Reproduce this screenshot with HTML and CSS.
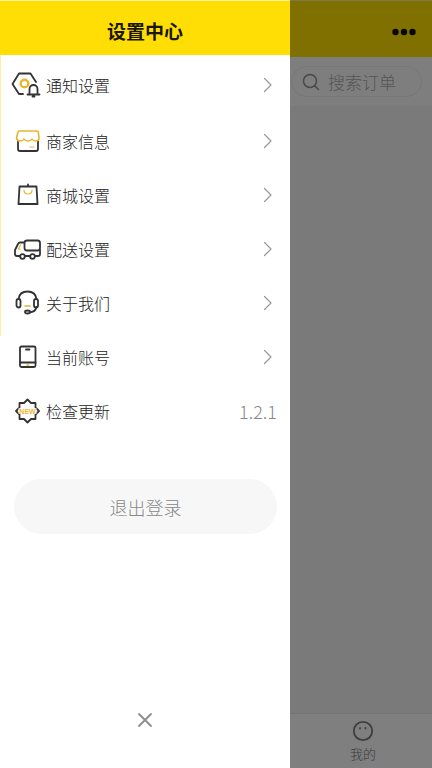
FILE: index.html
```html
<!DOCTYPE html>
<html lang="zh-CN">
<head>
<meta charset="utf-8">
<meta name="viewport" content="width=device-width, initial-scale=1">
<title>设置中心</title>
<link rel="stylesheet" href="styles.css">
</head>
<body>
<div class="app">
  <aside class="drawer">
    <header class="drawer-header"><h1>设置中心</h1></header>
    <nav class="menu">
      <a class="item" href="#notice">
        <svg class="icon" viewBox="0 0 32 32"><path class="ink" d="M12 25H8L1.500 15 8 4.500H19.500L25 13"/><circle class="gold thick" cx="13.500" cy="14.500" r="3.800"/><path class="ink" d="M18.500 25V20a4 4 0 0 1 8 0V25M16.500 25.500H28.500M21.500 27.500h2"/></svg>
        <span class="label">通知设置</span>
        <svg class="chevron" viewBox="0 0 10 16"><path d="M1.500 1.500 8 8l-6.500 6.500"/></svg>
      </a>
      <a class="item" href="#shop">
        <svg class="icon" viewBox="0 0 32 32"><path class="ink" d="M7 16v8q0 2 2 2H25q2 0 2-2V16"/><path class="gold" d="M8 6H26q1 0 1.300 1L28 13q0 3-3 3t-4-2q-1 2-4 2t-4-2q-1 2-4 2t-3.500-3L7 7q.200-1 1-1Z"/><path class="gold thin" d="M19 22h4"/></svg>
        <span class="label">商家信息</span>
        <svg class="chevron" viewBox="0 0 10 16"><path d="M1.500 1.500 8 8l-6.500 6.500"/></svg>
      </a>
      <a class="item" href="#mall">
        <svg class="icon" viewBox="0 0 32 32"><path class="ink" d="M8.500 7.500H25.500L26.500 25H7.500ZM17 7V5.500"/><path class="gold thin" d="M13 11q0 4 4 4t4-4"/></svg>
        <span class="label">商城设置</span>
        <svg class="chevron" viewBox="0 0 10 16"><path d="M1.500 1.500 8 8l-6.500 6.500"/></svg>
      </a>
      <a class="item" href="#delivery">
        <svg class="icon" viewBox="0 0 32 32"><path class="ink" d="M9 23H6q-2 0-2-2V17L7 11q.700-1.500 2-1.500h4M14 23h5M24 23h3q2 0 2-2V17"/><rect class="ink" x="13.500" y="7.500" width="15.500" height="10" rx="2.500"/><circle class="ink" cx="11.500" cy="23.500" r="2.300"/><circle class="ink" cx="21.500" cy="23.500" r="2.300"/><path class="gold thin" d="M9.500 12 7.500 16h1.500"/></svg>
        <span class="label">配送设置</span>
        <svg class="chevron" viewBox="0 0 10 16"><path d="M1.500 1.500 8 8l-6.500 6.500"/></svg>
      </a>
      <a class="item" href="#about">
        <svg class="icon" viewBox="0 0 32 32"><path class="ink" d="M7.500 12q1-7.500 9-7.500t9 7.500M25.500 20q-1 5-7 5.500"/><rect class="ink" x="5.500" y="12" width="4" height="8.500" rx="2"/><rect class="ink" x="23" y="12" width="4" height="8.500" rx="2"/><ellipse class="ink" cx="16.500" cy="25" rx="2.500" ry="1.500"/><path class="gold" d="M14 19h5"/></svg>
        <span class="label">关于我们</span>
        <svg class="chevron" viewBox="0 0 10 16"><path d="M1.500 1.500 8 8l-6.500 6.500"/></svg>
      </a>
      <a class="item" href="#account">
        <svg class="icon" viewBox="0 0 32 32"><rect class="ink" x="9" y="5.500" width="15.500" height="20.500" rx="1.500"/><path class="ink" d="M9 21.500H24.500M15 8.500h3.500"/><path class="gold" d="M16 24h1.500"/></svg>
        <span class="label">当前账号</span>
        <svg class="chevron" viewBox="0 0 10 16"><path d="M1.500 1.500 8 8l-6.500 6.500"/></svg>
      </a>
      <a class="item" href="#update">
        <svg class="icon" viewBox="0 0 32 32"><path class="ink" d="M16.500 4.500 20 8H24.500V12.500L28 16 24.500 19.500V24H20L16.500 27.500 13 24H8.500V19.500L5 16 8.500 12.500V8H13Z"/><rect class="gap" x="7.500" y="13.200" width="18" height="5.600"/><text class="new" x="16.500" y="18.500" text-anchor="middle">NEW</text></svg>
        <span class="label">检查更新</span>
        <span class="version">1.2.1</span>
      </a>
    </nav>
    <button class="logout" type="button">退出登录</button>
    <button class="close" type="button" aria-label="关闭"><svg viewBox="0 0 16 16"><path d="M2 2 14 14M14 2 2 14"/></svg></button>
  </aside>
  <main class="page">
    <header class="page-header">
      <button class="more" type="button" aria-label="更多"><svg viewBox="0 0 24 8"><circle cx="3.500" cy="4" r="3.200"/><circle cx="12" cy="4" r="3.200"/><circle cx="20.500" cy="4" r="3.200"/></svg></button>
    </header>
    <div class="search-bar">
      <label class="search">
        <svg viewBox="0 0 18 18"><circle cx="8" cy="8" r="6.500"/><path d="m13 13 3.500 3.500"/></svg>
        <input type="search" placeholder="搜索订单" aria-label="搜索订单">
      </label>
    </div>
    <section class="orders"></section>
    <footer class="tabbar">
      <a class="tab" href="#me">
        <svg viewBox="0 0 22 22"><circle cx="11" cy="11" r="9.200"/><path d="M8 8v.500M13.500 8v.500"/></svg>
        <span>我的</span>
      </a>
    </footer>
  </main>
</div>
</body>
</html>
```

FILE: styles.css
```css
* { box-sizing: border-box; }

body {
  margin: 0;
  font-family: "Noto Sans CJK SC", sans-serif;
  font-weight: 300;
  color: #222;
}

a { color: inherit; text-decoration: none; }
button { border: 0; padding: 0; background: none; font: inherit; }
svg { display: block; fill: none; stroke-linecap: round; stroke-linejoin: round; }

.app { display: grid; grid-template-columns: 290px 1fr; min-height: 100vh; }

.drawer { display: flex; flex-direction: column; background: #fff; }

.drawer-header {
  display: flex;
  align-items: center;
  justify-content: center;
  height: 55px;
  padding-top: 6px;
  border-top: 1px solid #fff29a;
  background: #ffde05;
}
.drawer-header h1 { margin: 0; font-size: 19px; line-height: 28px; font-weight: 700; color: #1a1600; }

.menu {
  background: linear-gradient(#fff0a0, #fff0a0) left top / 1px 281px no-repeat;
}
.item {
  display: flex;
  align-items: center;
  height: 54px;
  padding: 0 13px 0 11px;
}
.item:first-child { height: 59px; }
.icon { width: 32px; height: 32px; margin-right: 3px; }
.label { flex: 1; font-size: 16px; line-height: 24px; }
.chevron { width: 10px; height: 16px; margin-right: 4px; stroke: #999; stroke-width: 1.2; }
.version { font-size: 18px; line-height: 24px; color: #888; }

.ink { stroke: #333; stroke-width: 1.8; }
.gold { stroke: #e8b52e; stroke-width: 1.6; }
.thin { stroke-width: 1.2; }
.thick { stroke-width: 2.4; }
.gap { fill: #fff; }
.new { fill: #f0b62d; font: 700 7px "Liberation Sans", sans-serif; }

.logout {
  height: 55px;
  margin: 41px 13px 0 14px;
  border-radius: 28px;
  background: #f7f7f7;
  font-size: 18px;
  color: #888;
}

.close { align-self: center; margin: auto 0 40px; }
.close svg { width: 16px; height: 16px; stroke: #8c8c8c; stroke-width: 1.8; }

.page { display: flex; flex-direction: column; min-width: 0; background: #7a7a7a; }

.page-header {
  display: flex;
  align-items: center;
  justify-content: flex-end;
  height: 57px;
  padding: 6px 16px 0 0;
  border-top: 1px solid #7f7a4a;
  background: #807000;
}
.more svg { width: 24px; height: 8px; fill: #080600; }

.search-bar { height: 49px; padding: 9px 10px 0 1px; background: #7e7e7f; }
.search {
  display: flex;
  align-items: center;
  gap: 8px;
  height: 31px;
  padding-left: 10px;
  border: 1px solid #77777a;
  border-radius: 16px;
}
.search svg { flex: none; width: 18px; height: 18px; stroke: #494949; stroke-width: 1.5; }
.search input {
  width: 100%;
  min-width: 0;
  padding: 0;
  border: 0;
  outline: 0;
  background: none;
  font: 300 17px/24px "Noto Sans CJK SC", sans-serif;
  color: #333;
}
.search input::placeholder { color: #555; }

.orders { flex: 1; }

.tabbar { border-top: 1px solid #737575; background: #7f7f7f; }
.tab {
  display: flex;
  flex-direction: column;
  align-items: center;
  gap: 2px;
  height: 54px;
  padding: 6px 0 0 4px;
  font-size: 13px;
  line-height: 20px;
  color: #3a3a3a;
}
.tab svg { width: 22px; height: 22px; stroke: #3f3f3f; stroke-width: 1.8; }
```
